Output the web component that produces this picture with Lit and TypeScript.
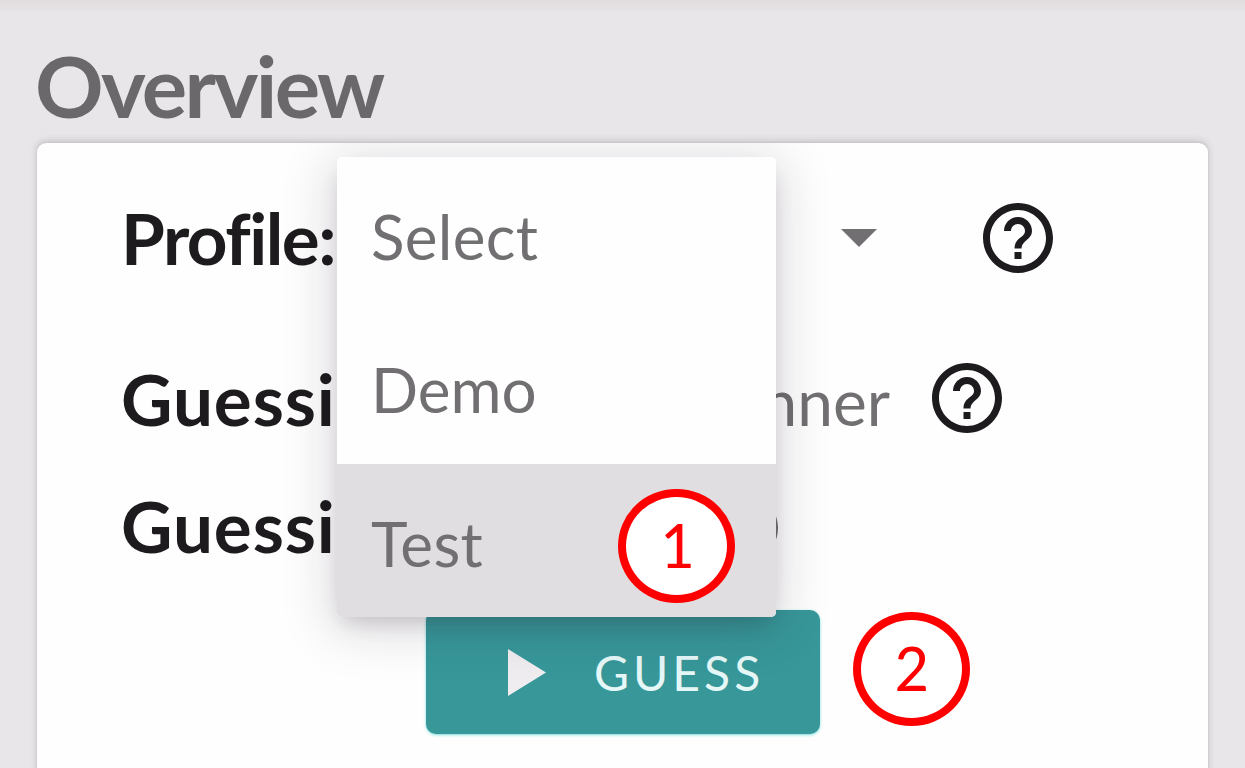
import { LitElement, html, css } from "lit";
import { customElement, property } from "lit/decorators.js";

@customElement("help-icon")
class HelpIcon extends LitElement {
  static styles = css`
    :host { display: block; width: 84px; height: 84px; flex: none; color: #1d1b1e; }
    svg { display: block; width: 84px; height: 84px; fill: currentColor; }
  `;
  render() {
    return html`<svg viewBox="0 0 24 24">
      <path d="M11 18h2v-2h-2v2zm1-16C6.48 2 2 6.48 2 12s4.48 10 10 10 10-4.480 10-10S17.520 2 12 2zm0 18c-4.410 0-8-3.590-8-8s3.590-8 8-8 8 3.590 8 8-3.590 8-8 8zm0-14c-2.210 0-4 1.790-4 4h2c0-1.100.9-2 2-2s2 .9 2 2c0 2-3 1.750-3 5h2c0-2.250 3-2.500 3-5 0-2.210-1.790-4-4-4z"/>
    </svg>`;
  }
}

@customElement("step-badge")
class StepBadge extends LitElement {
  @property() label = "";
  static styles = css`
    :host {
      display: flex; align-items: center; justify-content: center;
      box-sizing: border-box; width: 117px; height: 114px;
      border: 8px solid #ff0000; border-radius: 50%;
      background: #fff; color: #ff0000;
      font: 400 68px/60px Carlito, Lato, sans-serif;
    }
    span { padding-bottom: 3px; }
  `;
  render() {
    return html`<span>${this.label}</span>`;
  }
}

@customElement("app-root")
class AppRoot extends LitElement {
  static styles = css`
    :host {
      display: block; position: relative; box-sizing: border-box;
      width: 1245px; height: 768px; overflow: hidden;
      padding: 34px 37px 0;
      background: linear-gradient(#e1dcdd 0, #e5e0e1 7px, #e8e6e9 13px);
      font-family: Lato, sans-serif; color: #1d1b1e;
    }
    .title {
      margin: 0 0 0 -2px; height: 109px;
      font-size: 85px; line-height: 102px; font-weight: 700;
      letter-spacing: -2.650px; color: #6a686b;
    }
    .card {
      box-sizing: border-box; width: 1171px; height: 640px;
      padding: 53px 86px 0 84px; border-radius: 9px; background: #fefefe;
      box-shadow: 0 -2px 7px rgba(60, 50, 60, .2), 0 0 2px rgba(60, 50, 60, .14);
    }
    .row { display: flex; align-items: center; height: 84px; }
    .row.mode { margin-top: 76px; }
    .row.range { margin-top: 46px; }
    .label { flex: none; font-size: 71px; line-height: 84px; font-weight: 700; white-space: nowrap; letter-spacing: .9px; }
    .profile .label { width: 720px; letter-spacing: -1.500px; }
    .arrow { width: 36px; height: 18px; margin-right: 99px; fill: #716f72; }
    .mode .label { width: 633px; padding-top: 1px; }
    .value { width: 136px; margin-right: 35px; padding-top: 7px; text-align: right; font-size: 64px; line-height: 84px; color: #716f72; }
    .range .label { width: 579.500px; padding-bottom: 4px; }
    .range help-icon { color: #716f72; }
    .guess {
      display: flex; align-items: center; box-sizing: border-box;
      width: 394px; height: 124px; margin: 40px 0 0 305px; padding: 0 0 0 82px;
      border: 0; border-radius: 10px; background: #379799; color: #e6f7f8;
      box-shadow: 0 1px 3px rgba(70, 205, 205, .7);
      font: 400 48px/60px Lato, sans-serif; letter-spacing: 4px;
    }
    .guess span { padding-top: 2px; }
    .play { width: 38px; height: 47px; margin-right: 48px; fill: #efedf0; }
    .menu {
      position: absolute; left: 337px; top: 157px; width: 439px; height: 460px;
      border-radius: 5px; background: #fefefe; overflow: hidden;
    }
    .clip { position: absolute; left: 37px; top: 143px; width: 1171px; height: 625px; overflow: hidden; }
    .shadow {
      position: absolute; left: 300px; top: 14px; width: 439px; height: 460px; border-radius: 5px;
      box-shadow: 0 10px 20px -6px rgba(30, 20, 30, .18), 0 8px 52px 4px rgba(40, 25, 45, .17);
    }
    .item {
      box-sizing: border-box; height: 153.400px; padding: 4px 34px 0;
      font-size: 62px; line-height: 150px; color: #716f72;
    }
    .item:first-child { letter-spacing: .3px; }
    .item.active { background: #e0dee1; letter-spacing: .3px; }
    .one { position: absolute; left: 618px; top: 489px; }
    .two { position: absolute; left: 853px; top: 612px; }
  `;
  render() {
    return html`
      <h1 class="title">Overview</h1>
      <section class="card">
        <div class="row profile">
          <span class="label">Profile:</span>
          <svg class="arrow" viewBox="0 0 36 18"><path d="M0 0H36L18 18Z"/></svg>
          <help-icon></help-icon>
        </div>
        <div class="row mode">
          <span class="label">Guessi</span>
          <span class="value">nner</span>
          <help-icon></help-icon>
        </div>
        <div class="row range">
          <span class="label">Guessi</span>
          <help-icon></help-icon>
        </div>
        <button class="guess">
          <svg class="play" viewBox="0 0 38 47"><path d="M0 0L38 23.500L0 47Z"/></svg>
          <span>GUESS</span>
        </button>
      </section>
      <div class="clip"><div class="shadow"></div></div>
      <div class="menu">
        ${["Select", "Demo", "Test"].map(
          (name) => html`<div class="item ${name === "Test" ? "active" : ""}">${name}</div>`
        )}
      </div>
      <step-badge class="one" label="1"></step-badge>
      <step-badge class="two" label="2"></step-badge>
    `;
  }
}
